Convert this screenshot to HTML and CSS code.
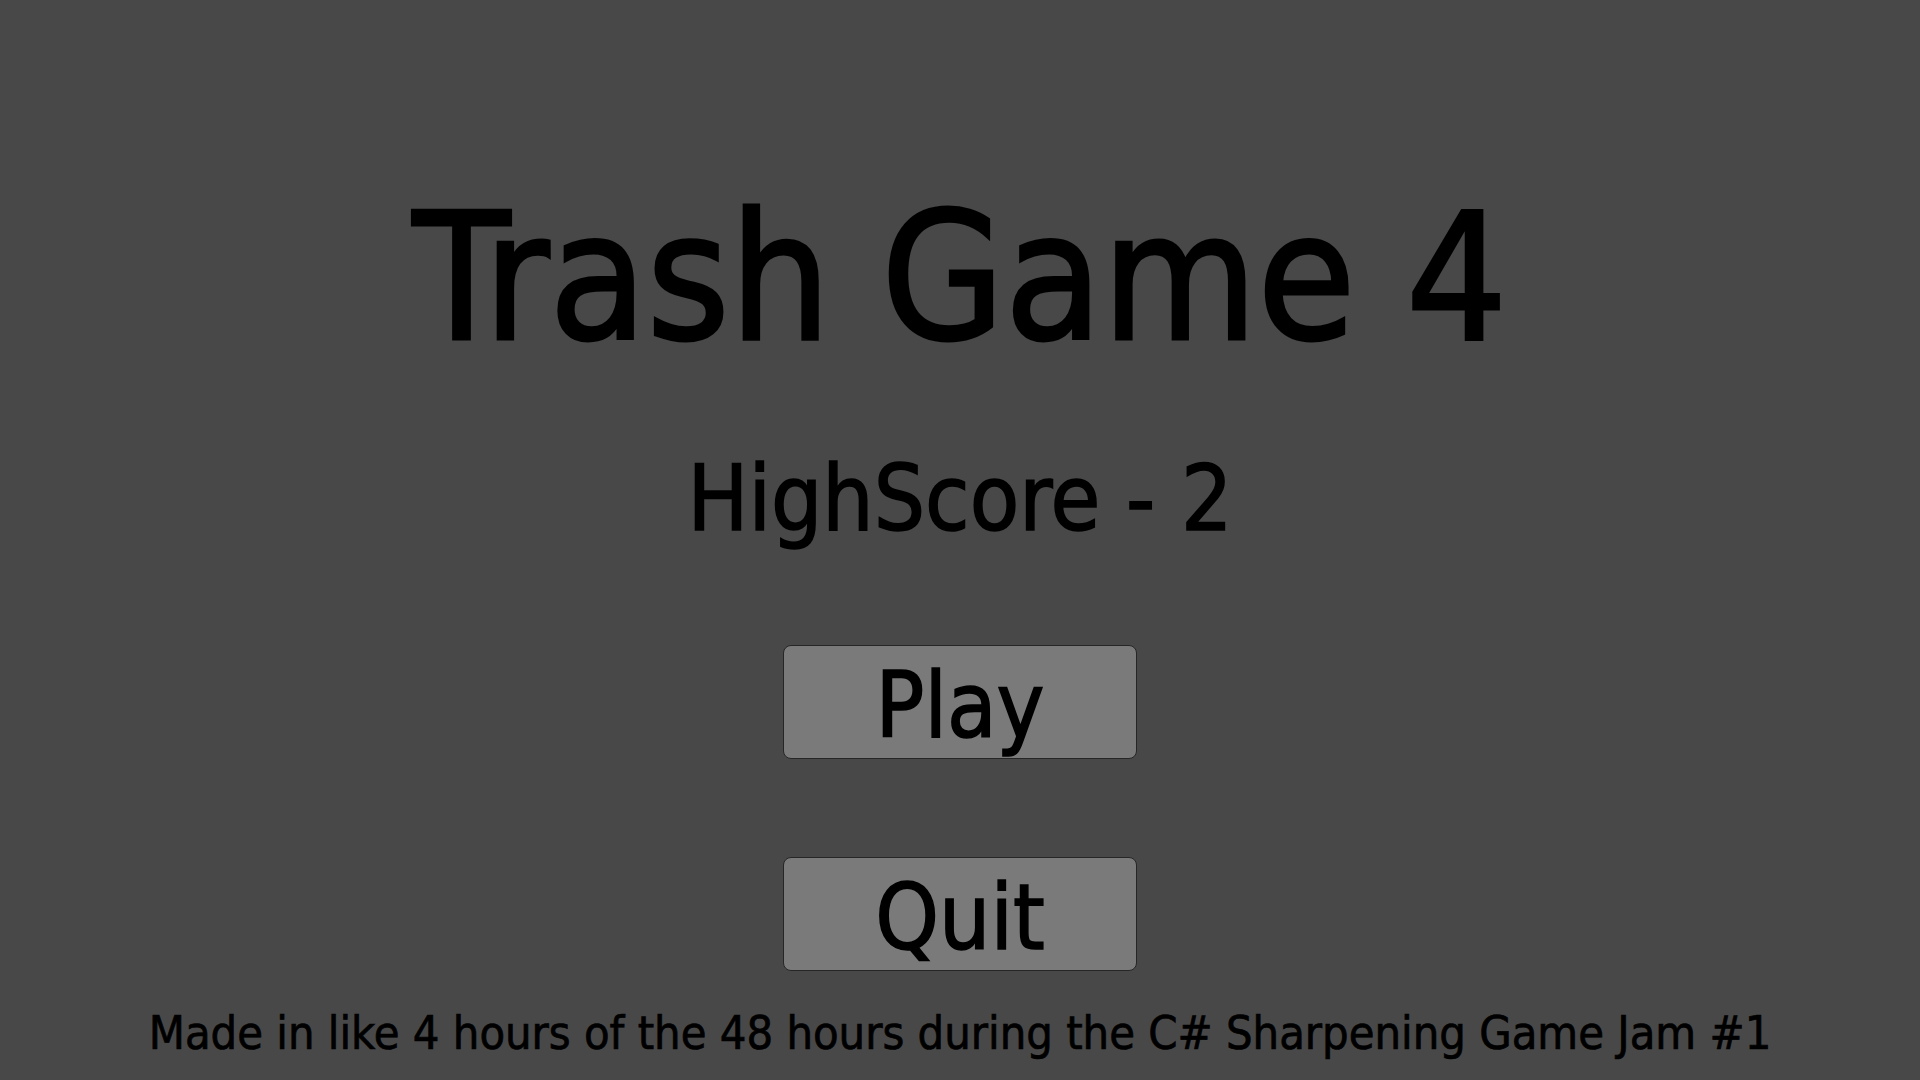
FILE: index.html
```html
<!DOCTYPE html>
<html lang="en">
<head>
<meta charset="utf-8">
<title>Trash Game 4</title>
<link rel="stylesheet" href="styles.css">
</head>
<body>
<main class="menu">
  <h1 class="title">Trash Game 4</h1>
  <div class="highscore">HighScore - 2</div>
  <button class="btn btn-play">Play</button>
  <button class="btn btn-quit">Quit</button>
  <p class="credits">Made in like 4 hours of the 48 hours during the C# Sharpening Game Jam #1</p>
</main>
</body>
</html>
```

FILE: styles.css
```css
html, body {
  margin: 0;
  padding: 0;
  width: 1920px;
  height: 1080px;
  overflow: hidden;
  background: #484848;
}

.menu {
  display: flex;
  flex-direction: column;
  align-items: center;
  padding-top: 190px;
  font-family: "Comic Sans MS", "DejaVu Sans Condensed", "DejaVu Sans", sans-serif;
  font-stretch: semi-condensed;
  color: #000;
}

.title {
  margin: 0;
  font-size: 177px;
  line-height: 177px;
  font-weight: normal;
  white-space: nowrap;
  -webkit-text-stroke: 3px #000;
}

.highscore {
  margin-top: 87px;
  font-size: 90px;
  line-height: 90px;
  white-space: nowrap;
  -webkit-text-stroke: 1.5px #000;
}

.btn {
  display: flex;
  align-items: center;
  justify-content: center;
  width: 354px;
  height: 114px;
  box-sizing: border-box;
  padding: 8px 0 0 0;
  background: #7a7a7a;
  border: 1px solid #262626;
  border-radius: 8px;
  font-family: inherit;
  font-stretch: inherit;
  font-size: 90px;
  line-height: 90px;
  color: #000;
  -webkit-text-stroke: 1.5px #000;
}

.btn-play {
  margin-top: 101px;
}

.btn-quit {
  margin-top: 98px;
}

.credits {
  margin: 39px 0 0 0;
  font-size: 46.6px;
  line-height: 47px;
  white-space: nowrap;
  -webkit-text-stroke: 0.7px #000;
}
```
